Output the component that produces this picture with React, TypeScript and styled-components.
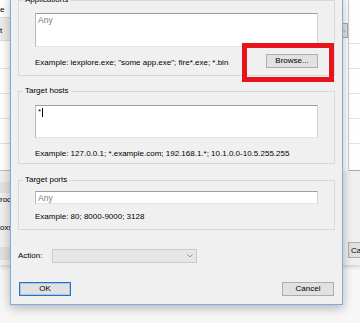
import React from "react";
import styled, { createGlobalStyle } from "styled-components";

const Global = createGlobalStyle`
  html, body { margin: 0; padding: 0; }
  body {
    width: 360px;
    height: 323px;
    overflow: hidden;
    background: #f7f7f7;
    font-family: "Liberation Sans", Arial, sans-serif;
  }
`;

const Stage = styled.div`
  position: relative;
  width: 360px;
  height: 323px;
  overflow: hidden;
  background: #f7f7f7;
  font-family: "Liberation Sans", Arial, sans-serif;
  font-size: 8px;
  color: #000;
`;

/* ---------- background window ---------- */

const BackWindow = styled.div`
  display: flex;
  height: 265px;
  background: #f0f0f0;
  box-shadow: 0 2px 4px rgba(0, 0, 0, 0.16);
`;

const Column = styled.div<{ $w: number }>`
  width: ${(p) => p.$w}px;
  flex: none;
  display: flex;
  flex-direction: column;
`;

const Covered = styled.div`
  flex: 1;
`;

const ListRow = styled.div<{ $h: number; $bg?: string; $line?: string; $pb?: number }>`
  height: ${(p) => p.$h}px;
  flex: none;
  box-sizing: border-box;
  background: ${(p) => p.$bg ?? "#ffffff"};
  border-bottom: 1px solid ${(p) => p.$line ?? "#e4e4e4"};
  display: flex;
  align-items: flex-end;
  padding-bottom: ${(p) => p.$pb ?? 0}px;
  white-space: nowrap;
  line-height: 10px;
`;

const Band = styled.div<{ $h: number; $bg: string }>`
  height: ${(p) => p.$h}px;
  flex: none;
  background: ${(p) => p.$bg};
  display: flex;
  align-items: center;
  white-space: nowrap;
  line-height: 10px;
`;

const TopPanel = styled.div`
  height: 171px;
  flex: none;
  display: flex;
`;

const ComboStrip = styled.div`
  width: 5px;
  flex: none;
  background: #ffffff;
  padding-top: 23px;
  box-sizing: border-box;
`;

const ComboStub = styled.div`
  height: 15px;
  box-sizing: border-box;
  background: #e5e5e5;
  border: 1px solid #adadad;
  border-left: none;
  display: flex;
  align-items: center;
  justify-content: flex-end;
  padding-right: 1px;
  overflow: hidden;
`;

const ListStrip = styled.div`
  flex: 1;
  border-left: 1px solid #cfcfcf;
  display: flex;
  flex-direction: column;
  background: #fff;
`;

const Lower = styled.div`
  flex: 1;
  display: flex;
  flex-direction: column;
  background: #f0f0f0;
`;

const CancelStub = styled.div`
  margin: 71px 0 0 5px;
  height: 16px;
  box-sizing: border-box;
  background: #e1e1e1;
  border: 1px solid #adadad;
  border-right: none;
  display: flex;
  align-items: center;
  padding-left: 2px;
  white-space: nowrap;
`;

/* ---------- dialog ---------- */

const Dialog = styled.div`
  position: absolute;
  left: 10px;
  top: -6px;
  width: 333px;
  box-sizing: border-box;
  border: 1px solid #79aee2;
  background: #f0f0f0;
  box-shadow: 0 3px 10px rgba(0, 0, 0, 0.28);
  padding: 0 7px 8px;
  display: flex;
  flex-direction: column;
`;

const Group = styled.fieldset<{ $mt: number; $pt: number; $pb: number }>`
  margin: ${(p) => p.$mt}px 0 0;
  padding: ${(p) => p.$pt}px 16px ${(p) => p.$pb}px;
  border: 1px solid #d9d9d9;
  min-width: 0;
`;

const Legend = styled.legend`
  margin-left: -12px;
  padding: 0 2px;
  line-height: 10px;
  font-size: 8px;
`;

const TextBox = styled.div<{ $h: number }>`
  height: ${(p) => p.$h}px;
  box-sizing: border-box;
  background: #ffffff;
  border: 1px solid;
  border-color: #9e9e9e #d2d2d2 #e4e4e4 #b9b9b9;
  padding: 1px 2px;
  line-height: 10px;
  display: flex;
  align-items: flex-start;
`;

const Placeholder = styled.span`
  color: #7a7a7a;
  font-size: 8.5px;
`;

const Caret = styled.span`
  display: inline-block;
  width: 1px;
  height: 9px;
  margin: 1px 0 0 1px;
  background: #000;
`;

const BrowseRow = styled.div`
  margin-top: 7px;
  height: 14px;
  display: flex;
  justify-content: space-between;
`;

const Example = styled.div<{ $mt?: number }>`
  margin-top: ${(p) => p.$mt ?? 0}px;
  line-height: 14px;
  white-space: nowrap;
`;

const ExampleLow = styled.span`
  align-self: flex-end;
  line-height: 10px;
  white-space: nowrap;
`;

const BrowseWrap = styled.div`
  position: relative;
  display: flex;
`;

const Highlight = styled.div`
  position: absolute;
  top: -11px;
  left: -24px;
  right: -16px;
  bottom: -14px;
  border: 5px solid #e8141c;
  box-sizing: border-box;
  pointer-events: none;
`;

const Button = styled.button<{ $primary?: boolean }>`
  width: 52px;
  height: 14px;
  box-sizing: border-box;
  margin: 0;
  padding: 0;
  background: #e1e1e1;
  border: 1px solid ${(p) => (p.$primary ? "#1f74cf" : "#adadad")};
  box-shadow: ${(p) => (p.$primary ? "inset 0 0 0 1px rgba(31,116,207,0.25)" : "none")};
  font-family: "Liberation Sans", Arial, sans-serif;
  font-size: 8px;
  line-height: 12px;
  color: #000;
  display: flex;
  align-items: center;
  justify-content: center;
`;

const ActionRow = styled.div`
  margin-top: 19px;
  height: 14px;
  display: flex;
  align-items: center;
`;

const ActionLabel = styled.span`
  width: 34px;
  flex: none;
  line-height: 10px;
`;

const Select = styled.div`
  width: 145px;
  height: 14px;
  box-sizing: border-box;
  background: #e6e6e6;
  border: 1px solid #cccccc;
  display: flex;
  align-items: center;
  justify-content: flex-end;
  padding-right: 3px;
`;

const ButtonRow = styled.div`
  margin-top: 19px;
  padding: 0 1px;
  display: flex;
  justify-content: space-between;
`;

const Chevron = ({ color = "#8a8a8a" }: { color?: string }) => (
  <svg width="6" height="4" viewBox="0 0 6 4">
    <polyline points="0.5,0.5 3,3 5.5,0.5" fill="none" stroke={color} strokeWidth="0.9" />
  </svg>
);

export default function App() {
  return (
    <>
      <Global />
      <Stage>
        <BackWindow>
          <Column $w={10}>
            <ListRow $h={18} $pb={2} $line="#dcdcdc">
              <span>e</span>
            </ListRow>
            <ListRow $h={23} $pb={4} $bg="#ececec" $line="#dcdcdc">
              <span>t</span>
            </ListRow>
            <ListRow $h={28} />
            <ListRow $h={25} />
            <ListRow $h={25} />
            <ListRow $h={25} />
            <ListRow $h={27} $line="#bdbdbd" />
            <Lower>
              <Band $h={11} $bg="#f0f0f0" />
              <Band $h={11} $bg="#e2e2e2" />
              <Band $h={14} $bg="#f0f0f0">
                <span>roc</span>
              </Band>
              <Band $h={14} $bg="#f0f0f0" />
              <Band $h={14} $bg="#f0f0f0">
                <span>oxs</span>
              </Band>
              <Band $h={12} $bg="#f0f0f0" />
              <Band $h={13} $bg="#e1e1e1" />
            </Lower>
          </Column>
          <Covered />
          <Column $w={17}>
            <TopPanel>
              <ComboStrip>
                <ComboStub>
                  <Chevron color="#606060" />
                </ComboStub>
              </ComboStrip>
              <ListStrip>
                <ListRow $h={44} />
                <ListRow $h={25} />
                <ListRow $h={25} />
                <ListRow $h={25} />
                <ListRow $h={25} />
                <ListRow $h={27} $line="#a9a9a9" />
              </ListStrip>
            </TopPanel>
            <Lower>
              <CancelStub>Ca</CancelStub>
            </Lower>
          </Column>
        </BackWindow>

        <Dialog>
          <Group $mt={0} $pt={8} $pb={7}>
            <Legend>Applications</Legend>
            <TextBox $h={34}>
              <Placeholder>Any</Placeholder>
            </TextBox>
            <BrowseRow>
              <ExampleLow>Example: iexplore.exe; "some app.exe"; fire*.exe; *.bin</ExampleLow>
              <BrowseWrap>
                <Button type="button">Browse...</Button>
                <Highlight />
              </BrowseWrap>
            </BrowseRow>
          </Group>

          <Group $mt={10} $pt={9} $pb={2}>
            <Legend>Target hosts</Legend>
            <TextBox $h={33}>
              <span>*</span>
              <Caret />
            </TextBox>
            <Example $mt={9}>Example: 127.0.0.1; *.example.com; 192.168.1.*; 10.1.0.0-10.5.255.255</Example>
          </Group>

          <Group $mt={11} $pt={6} $pb={5}>
            <Legend>Target ports</Legend>
            <TextBox $h={13}>
              <Placeholder>Any</Placeholder>
            </TextBox>
            <Example $mt={6}>Example: 80; 8000-9000; 3128</Example>
          </Group>

          <ActionRow>
            <ActionLabel>Action:</ActionLabel>
            <Select>
              <Chevron />
            </Select>
          </ActionRow>

          <ButtonRow>
            <Button type="button" $primary>OK</Button>
            <Button type="button">Cancel</Button>
          </ButtonRow>
        </Dialog>
      </Stage>
    </>
  );
}
